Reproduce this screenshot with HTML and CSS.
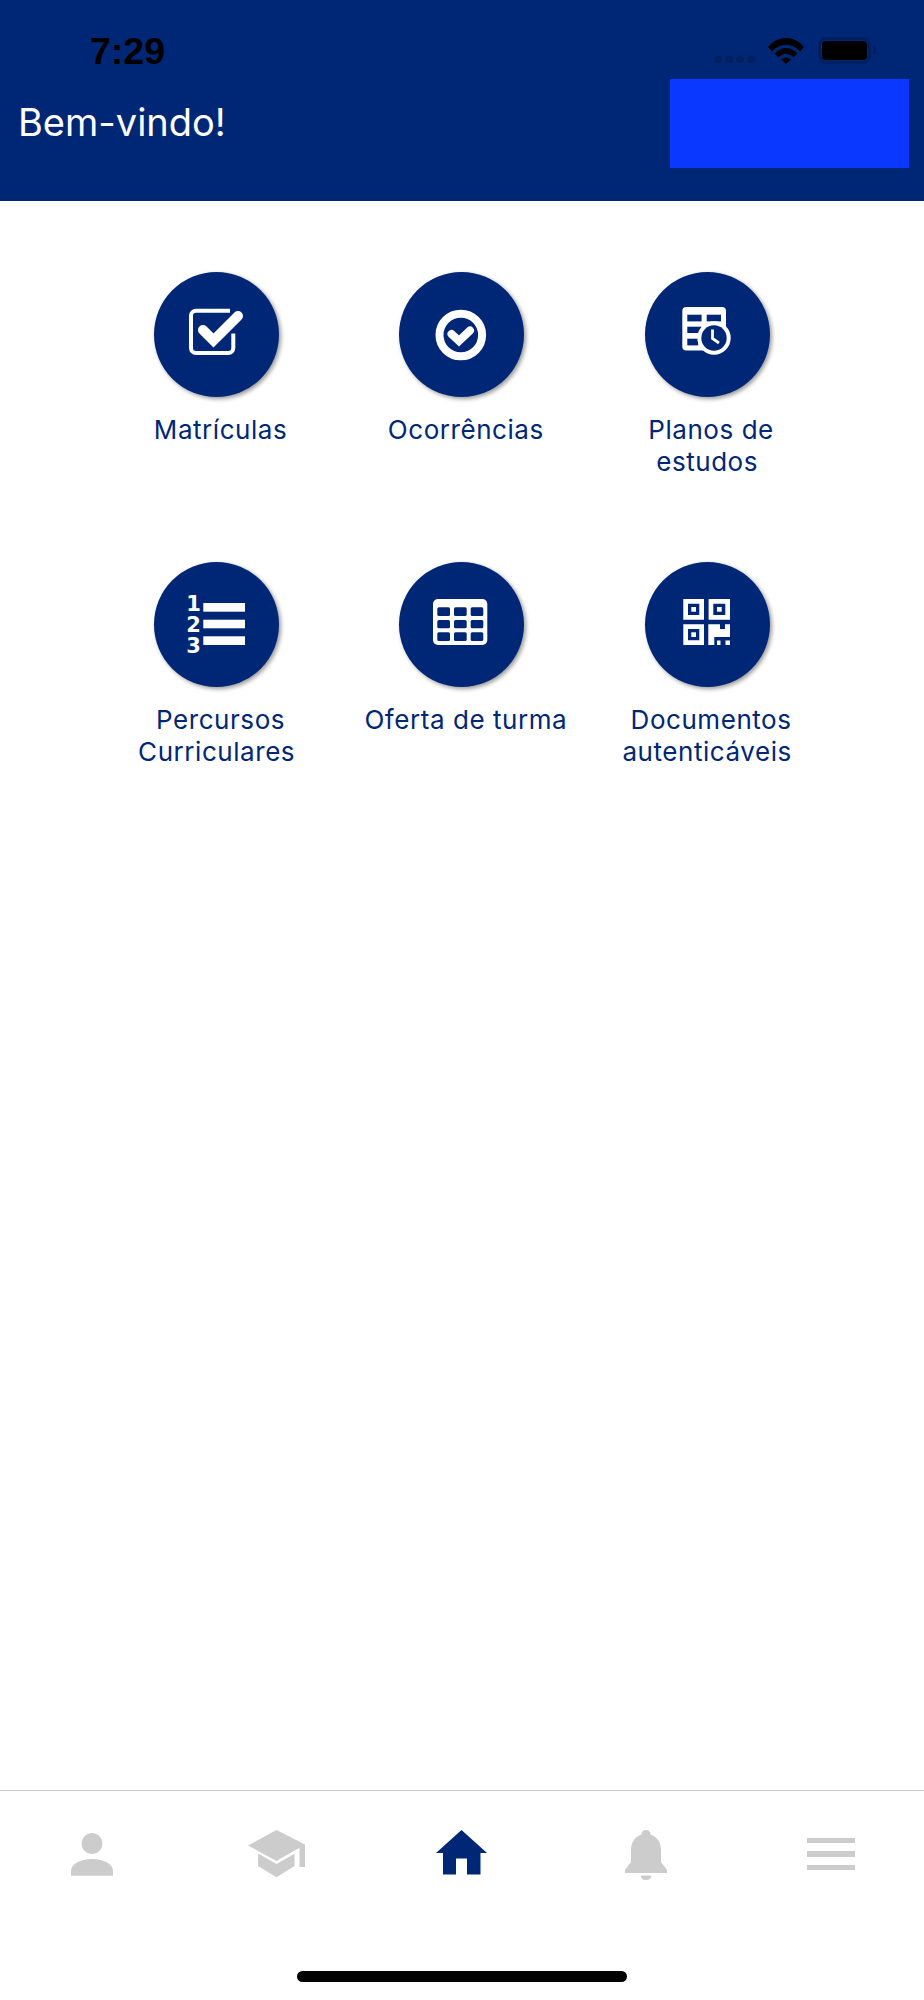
FILE: index.html
```html
<!DOCTYPE html>
<html lang="pt">
<head>
<meta charset="utf-8">
<title>Bem-vindo!</title>
<link rel="stylesheet" href="styles.css">
</head>
<body>
<div class="screen">
  <header class="header">
    <div class="status">
      <span class="time">7:29</span>
      <div class="status-icons">
        <div class="signal"><i></i><i></i><i></i><i></i></div>
        <svg class="wifi" viewBox="0 0 36 26"><path d="M0 9C9.500-3 26.500-3 36 9L32 13.500C24 4.500 12 4.500 4 13.500Z"/><path d="M6.500 15.500C13 8 23 8 29.500 15.500L25.500 19.500C20.500 14.500 15.500 14.500 10.500 19.500Z"/><path d="M13 21.500C16 18.700 20 18.700 23 21.500L18 26Z"/></svg>
        <div class="battery"><div class="battery-fill"></div></div>
        <div class="battery-nub"></div>
      </div>
    </div>
    <div class="title-row">
      <h1 class="title">Bem-vindo!</h1>
      <div class="brand-box"></div>
    </div>
  </header>

  <main class="grid">
    <a class="tile">
      <span class="disc">
        <svg class="icon" viewBox="0 0 125 125"><path class="line" stroke-width="4" d="M76 38.700H42a5 5 0 0 0-5 5V76a5 5 0 0 0 5 5h32.300a5 5 0 0 0 5-5V61.500"/><path class="line" stroke-width="10" stroke-linecap="round" d="M49 58l10.500 10.500L84 44"/></svg>
      </span>
      <span class="label"> Matrículas</span>
    </a>
    <a class="tile">
      <span class="disc">
        <svg class="icon" viewBox="0 0 125 125"><circle class="line" cx="61.800" cy="63" r="21.300" stroke-width="8"/><path class="line" stroke-width="8" stroke-linecap="round" d="M52.500 62l7.500 7 11-10.500"/></svg>
      </span>
      <span class="label"> Ocorrências</span>
    </a>
    <a class="tile">
      <span class="disc">
        <svg class="icon" viewBox="0 0 125 125"><rect class="solid" x="37.300" y="35" width="43.700" height="43.500" rx="4"/><g class="cut"><rect x="42.300" y="42.700" width="14.300" height="6.700"/><rect x="61.700" y="42.700" width="14.300" height="6.700"/><rect x="42.300" y="54.700" width="14.300" height="6.300"/><rect x="42.300" y="66.700" width="11" height="6.700"/></g><circle class="solid" cx="69" cy="66" r="16.700"/><circle class="cut" cx="69" cy="66" r="12.700"/><path class="line" stroke-width="2.800" d="M67.500 57.500V66.500L74 71"/></svg>
      </span>
      <span class="label"> Planos de
estudos</span>
    </a>
    <a class="tile">
      <span class="disc">
        <svg class="icon" viewBox="0 0 125 125"><rect class="solid" x="49.300" y="41" width="41.700" height="8.700"/><rect class="solid" x="49.300" y="57.700" width="41.700" height="8.600"/><rect class="solid" x="49.300" y="74.300" width="41.700" height="8.700"/><g class="digits"><text x="39.500" y="49.300">1</text><text x="39.500" y="70.300">2</text><text x="39.500" y="91">3</text></g></svg>
      </span>
      <span class="label"> Percursos
Curriculares</span>
    </a>
    <a class="tile">
      <span class="disc">
        <svg class="icon" viewBox="0 0 125 125"><rect class="solid" x="34" y="37" width="54.300" height="46" rx="5"/><g class="cut"><rect x="38.300" y="45.300" width="12.700" height="8.700" rx="1.500"/><rect x="55" y="45.300" width="12.700" height="8.700" rx="1.500"/><rect x="71.700" y="45.300" width="12.600" height="8.700" rx="1.500"/><rect x="38.300" y="58" width="12.700" height="8.300" rx="1.500"/><rect x="55" y="58" width="12.700" height="8.300" rx="1.500"/><rect x="71.700" y="58" width="12.600" height="8.300" rx="1.500"/><rect x="38.300" y="70.300" width="12.700" height="8.700" rx="1.500"/><rect x="55" y="70.300" width="12.700" height="8.700" rx="1.500"/><rect x="71.700" y="70.300" width="12.600" height="8.700" rx="1.500"/></g></svg>
      </span>
      <span class="label"> Oferta de turma</span>
    </a>
    <a class="tile">
      <span class="disc">
        <svg class="icon" viewBox="0 0 125 125"><g class="solid"><path fill-rule="evenodd" d="M38.300 37h20.700v20.700H38.300zM43 41.700V53h11.300V41.700z"/><rect x="46.300" y="45" width="4.700" height="4.700"/><path fill-rule="evenodd" d="M63.600 37h21.400v20.700H63.600zM68.300 41.700V53h12V41.700z"/><rect x="72" y="45" width="4.700" height="4.700"/><path fill-rule="evenodd" d="M38.300 62.300h20.700V83H38.300zM43 67V78.300h11.300V67z"/><rect x="46.300" y="70.300" width="4.700" height="4.700"/><path d="M63.300 62.300H75V67H80V62.300H85V75H69.300V83H63.300Z"/><rect x="72" y="78.500" width="3.500" height="4.500"/><rect x="80.500" y="78.500" width="4.500" height="4.500"/></g></svg>
      </span>
      <span class="label"> Documentos
autenticáveis</span>
    </a>
  </main>

  <nav class="tabbar">
    <div class="tabs">
      <a class="tab">
        <svg class="tab-icon muted person" width="42" height="43" viewBox="0 0 42 43"><circle cx="21" cy="10.500" r="10.500"/><path d="M0 42.700V38C0 31 9 26 21 26S42 31 42 38v4.700Z"/></svg>
      </a>
      <a class="tab">
        <svg class="tab-icon muted" width="58" height="48" viewBox="0 0 58 48"><path d="M28.500 0 57 14.500V37h-5.500V17.700L28.500 31 0 15.500Z"/><path d="M10 23.500 28.500 34 46.500 23.700V36L28.500 47.300 10 36Z"/></svg>
      </a>
      <a class="tab">
        <svg class="tab-icon active home" width="51" height="45" viewBox="0 0 51 45"><path d="M25.500 0 51 23H44.500V44.500H31V28.500H20V44.500H7V23H0Z"/></svg>
      </a>
      <a class="tab">
        <svg class="tab-icon muted bell" width="42" height="50" viewBox="0 0 42 50"><path d="M21 0C24 0 25.500 1.800 25.500 4.500 32 6.500 36 12.500 36 20V32L42 40V43H0V40L6 32V20C6 12.500 10 6.500 16.500 4.500 16.500 1.800 18 0 21 0Z"/><path d="M15.500 45.500H26.500C26 48.500 24 50 21 50S16 48.500 15.500 45.500Z"/></svg>
      </a>
      <a class="tab">
        <div class="menu-icon"><i></i><i></i><i></i></div>
      </a>
    </div>
    <div class="home-bar"></div>
  </nav>
</div>
</body>
</html>
```

FILE: styles.css
```css
* { box-sizing: border-box; }
html, body { margin: 0; padding: 0; background: #fff; }
body { font-family: Inter, "Liberation Sans", sans-serif; }

.screen {
  width: 924px;
  height: 2000px;
  display: flex;
  flex-direction: column;
  background: #fff;
  overflow: hidden;
}

.header {
  height: 201px;
  background: #002776;
  padding-top: 36px;
  flex: none;
}
.status {
  height: 28px;
  display: flex;
  align-items: center;
  justify-content: space-between;
  padding: 1px 48px 0 90px;
}
.time {
  font-family: "Liberation Sans", Arial, sans-serif;
  font-weight: 700;
  font-size: 37.500px;
  line-height: 28px;
  color: #000;
}
.status-icons { display: flex; align-items: flex-end; margin-top: -1px; }
.signal { display: flex; gap: 3px; margin-right: 13px; margin-bottom: 1px; }
.signal i { width: 8px; height: 7px; border-radius: 4px; background: #00205e; }
.wifi { width: 36px; height: 26px; margin-right: 14px; fill: #000; }
.battery {
  width: 53px;
  height: 27px;
  border: 3px solid #001f5f;
  border-radius: 8px;
  padding: 1px;
}
.battery-fill { width: 100%; height: 100%; background: #000; border-radius: 4px; }
.battery-nub {
  width: 3px;
  height: 9px;
  margin: 0 0 9px 2px;
  background: #001f5f;
  border-radius: 0 3px 3px 0;
}

.title-row {
  display: flex;
  justify-content: space-between;
  align-items: flex-start;
  padding: 15px 15px 0 18px;
}
.title {
  margin: 21px 0 0;
  font-size: 38px;
  line-height: 44px;
  font-weight: 400;
  color: #fff;
}
.brand-box { width: 239px; height: 89px; background: #0a38ff; }

.grid {
  flex: 1;
  display: grid;
  grid-template-columns: repeat(3, 245.250px);
  grid-auto-rows: 290px;
  justify-content: start;
  padding: 71px 0 0 94px;
}
.tile { display: flex; flex-direction: column; align-items: center; }
.disc {
  width: 125px;
  height: 125px;
  border-radius: 50%;
  background: #002776;
  box-shadow: 2px 2px 4px rgba(0, 0, 0, 0.4);
  flex: none;
}
.icon { display: block; width: 125px; height: 125px; }
.line { fill: none; stroke: #fff; }
.solid { fill: #fff; }
.cut { fill: #002776; }
.digits text {
  font-family: "DejaVu Sans", sans-serif;
  font-weight: 700;
  font-size: 21px;
  text-anchor: middle;
  fill: #fff;
}
.label {
  margin-top: 17px;
  font-size: 26px;
  font-weight: 380;
  letter-spacing: 0.55px;
  line-height: 32px;
  color: #002776;
  text-align: center;
  white-space: pre-wrap;
}

.tabbar {
  height: 210px;
  flex: none;
  border-top: 1.500px solid #ccc;
  display: flex;
  flex-direction: column;
  align-items: center;
}
.tabs { width: 100%; height: 180px; display: flex; align-items: flex-start; padding-top: 39px; }
.tab { flex: 1; display: flex; justify-content: center; }
.tab-icon { display: block; }
.person { margin-top: 2.500px; }
.home { margin-right: 1.500px; }
.bell { margin-right: 2px; }
.muted { fill: #ccc; }
.active { fill: #002776; }
.menu-icon { width: 48px; margin-top: 8px; margin-right: 1px; display: flex; flex-direction: column; gap: 8px; }
.menu-icon i { display: block; height: 5.300px; background: #ccc; }
.home-bar { width: 330px; height: 11px; border-radius: 6px; background: #000; }
```
